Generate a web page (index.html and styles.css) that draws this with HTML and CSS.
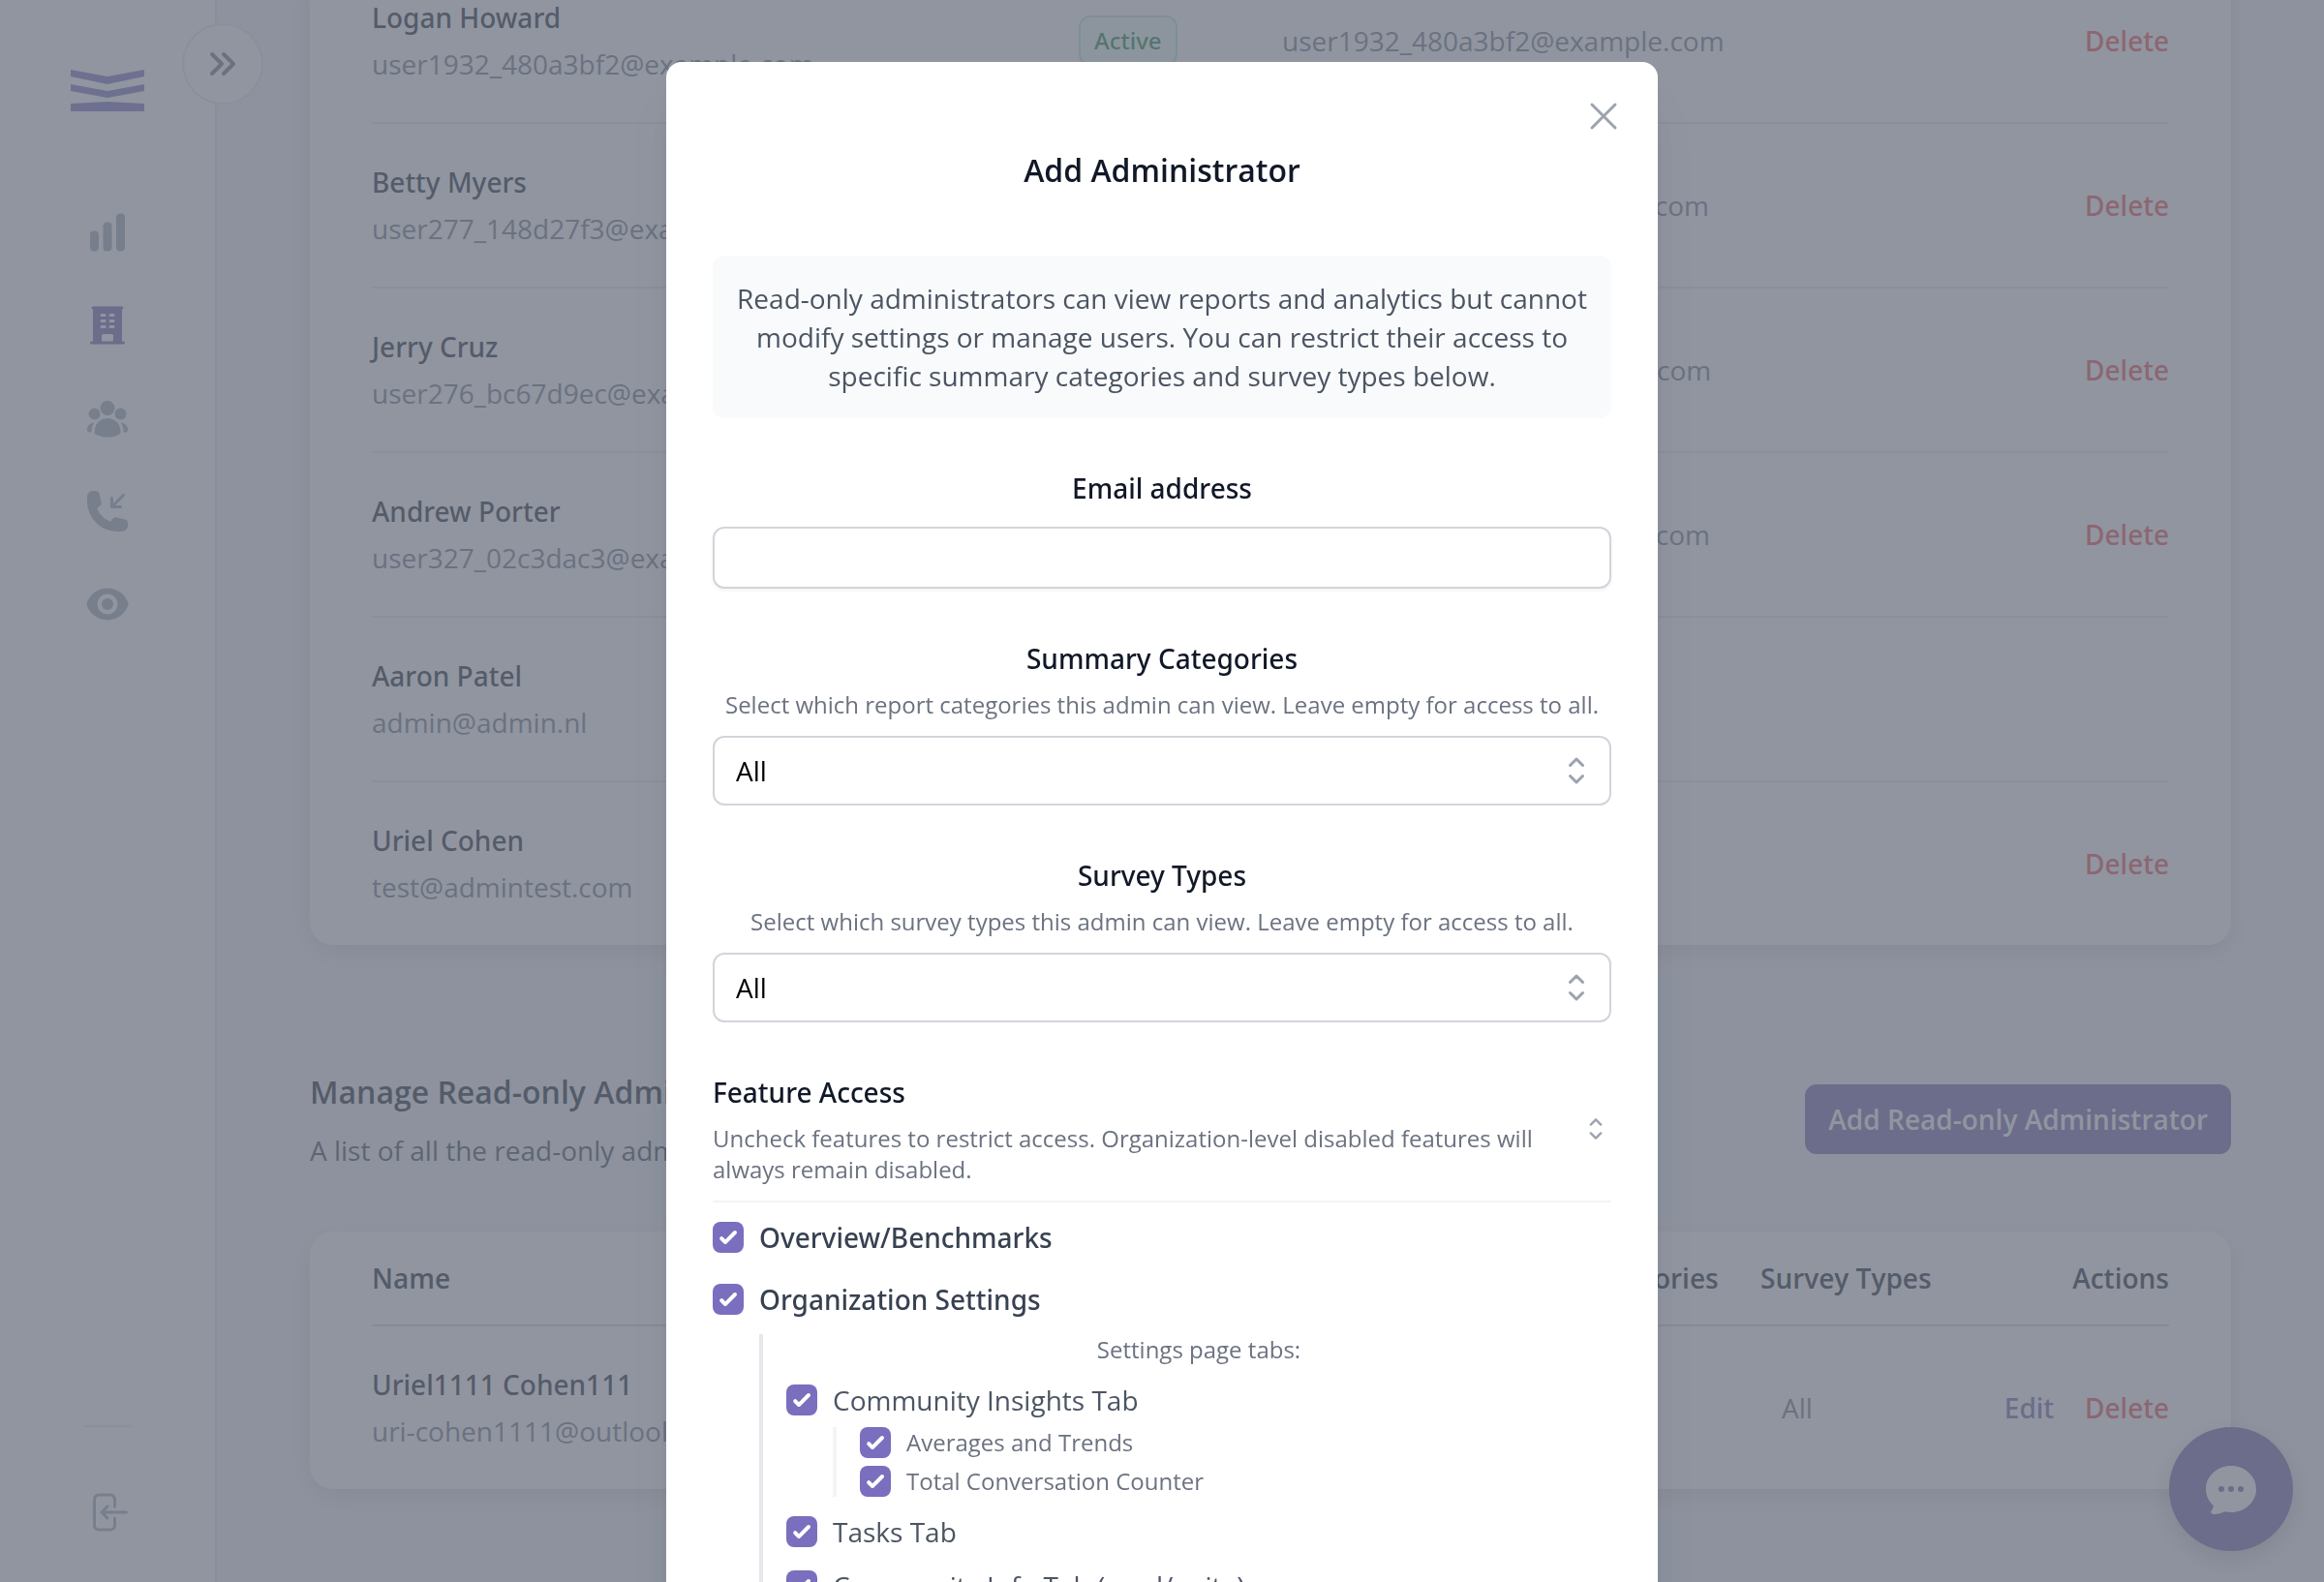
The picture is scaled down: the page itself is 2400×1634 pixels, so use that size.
FILE: index.html
```html
<!DOCTYPE html>
<html lang="en">
<head>
    <meta charset="UTF-8">
    <meta name="viewport" content="width=device-width, initial-scale=1">
    <title>Administrators</title>
    <link rel="stylesheet" href="styles.css">
</head>
<body>
    <div class="app">
        <aside class="sidebar">
            <a href="#" class="logo" aria-label="Home">
                <svg width="76" height="43" viewBox="0 0 76 43" fill="currentColor">
                    <path d="M0 0l38 7 38-7v7l-38 8L0 7z"/>
                    <path d="M0 15l38 7 38-7v7l-38 7-38-7z"/>
                    <path d="M0 35l38-2 38 2v8H0z"/>
                </svg>
            </a>
            <nav class="side-nav">
                <a href="#" aria-label="Reports">
                    <svg class="icon" viewBox="0 0 24 24"><path d="M18.375 2.25c-1.035 0-1.875.84-1.875 1.875v15.75c0 1.035.84 1.875 1.875 1.875h.75c1.035 0 1.875-.84 1.875-1.875V4.125c0-1.036-.84-1.875-1.875-1.875h-.75ZM9.75 8.625c0-1.036.84-1.875 1.875-1.875h.75c1.036 0 1.875.84 1.875 1.875v11.25c0 1.035-.84 1.875-1.875 1.875h-.75a1.875 1.875 0 0 1-1.875-1.875V8.625ZM3 13.125c0-1.036.84-1.875 1.875-1.875h.75c1.036 0 1.875.84 1.875 1.875v6.75c0 1.035-.84 1.875-1.875 1.875h-.75A1.875 1.875 0 0 1 3 19.875v-6.75Z"/></svg>
                </a>
                <a href="#" class="active" aria-label="Organization">
                    <svg class="icon" viewBox="0 0 24 24"><path fill-rule="evenodd" d="M4.5 2.25a.75.75 0 0 0 0 1.5v16.5h-.75a.75.75 0 0 0 0 1.5h16.5a.75.75 0 0 0 0-1.5h-.75V3.75a.75.75 0 0 0 0-1.5h-15ZM9 6a.75.75 0 0 0 0 1.5h1.5a.75.75 0 0 0 0-1.5H9Zm-.75 3.75A.75.75 0 0 1 9 9h1.5a.75.75 0 0 1 0 1.5H9a.75.75 0 0 1-.75-.75ZM9 12a.75.75 0 0 0 0 1.5h1.5a.75.75 0 0 0 0-1.5H9Zm3.75-5.25A.75.75 0 0 1 13.5 6H15a.75.75 0 0 1 0 1.5h-1.5a.75.75 0 0 1-.75-.75ZM13.5 9a.75.75 0 0 0 0 1.5H15A.75.75 0 0 0 15 9h-1.5Zm-.75 3.75a.75.75 0 0 1 .75-.75H15a.75.75 0 0 1 0 1.5h-1.5a.75.75 0 0 1-.75-.75ZM9 19.5v-2.25a.75.75 0 0 1 .75-.75h4.5a.75.75 0 0 1 .75.75v2.25a.75.75 0 0 1-.75.75h-4.5A.75.75 0 0 1 9 19.5Z"/></svg>
                </a>
                <a href="#" aria-label="Users">
                    <svg class="icon" viewBox="0 0 24 24"><path d="M8.25 6.75a3.75 3.75 0 1 1 7.5 0 3.75 3.75 0 0 1-7.5 0ZM15.75 9.75a3 3 0 1 1 6 0 3 3 0 0 1-6 0ZM2.25 9.75a3 3 0 1 1 6 0 3 3 0 0 1-6 0ZM6.31 15.117A6.745 6.745 0 0 1 12 12a6.745 6.745 0 0 1 6.709 7.498.75.75 0 0 1-.372.568A12.696 12.696 0 0 1 12 21.75c-2.305 0-4.47-.612-6.337-1.684a.75.75 0 0 1-.372-.568 6.787 6.787 0 0 1 1.019-4.38Z"/><path d="M5.082 14.254a8.287 8.287 0 0 0-1.308 5.135 9.687 9.687 0 0 1-1.764-.44l-.115-.04a.563.563 0 0 1-.373-.487l-.01-.121a3.75 3.75 0 0 1 3.57-4.047ZM20.226 19.389a8.287 8.287 0 0 0-1.308-5.135 3.75 3.75 0 0 1 3.57 4.047l-.01.121a.563.563 0 0 1-.373.486l-.115.04c-.567.2-1.156.349-1.764.441Z"/></svg>
                </a>
                <a href="#" aria-label="Calls">
                    <svg class="icon" viewBox="0 0 24 24"><path d="M19.5 9.75a.75.75 0 0 1-.75.75h-4.5a.75.75 0 0 1-.75-.75v-4.5a.75.75 0 0 1 1.5 0v2.69l4.72-4.72a.75.75 0 1 1 1.06 1.06L16.06 9h2.69a.75.75 0 0 1 .75.75Z"/><path d="M1.5 4.5a3 3 0 0 1 3-3h1.372c.86 0 1.61.586 1.819 1.42l1.105 4.423a1.875 1.875 0 0 1-.694 1.955l-1.293.97c-.135.101-.164.249-.126.352a11.285 11.285 0 0 0 6.697 6.697c.103.038.25.009.352-.126l.97-1.293a1.875 1.875 0 0 1 1.955-.694l4.423 1.105c.834.209 1.42.959 1.42 1.82V19.5a3 3 0 0 1-3 3h-2.25C8.552 22.5 1.5 15.448 1.5 6.75V4.5Z"/></svg>
                </a>
                <a href="#" aria-label="Overview">
                    <svg class="icon" viewBox="0 0 24 24"><path d="M12 15a3 3 0 1 0 0-6 3 3 0 0 0 0 6Z"/><path fill-rule="evenodd" d="M1.323 11.447C2.811 6.976 7.028 3.75 12.001 3.75c4.97 0 9.185 3.223 10.675 7.69.12.362.12.752 0 1.113-1.487 4.471-5.705 7.697-10.677 7.697-4.97 0-9.186-3.223-10.675-7.69a1.762 1.762 0 0 1 0-1.113ZM17.25 12a5.25 5.25 0 1 1-10.5 0 5.25 5.25 0 0 1 10.5 0Z"/></svg>
                </a>
            </nav>
            <div class="side-bottom">
                <a href="#" aria-label="Log out">
                    <svg class="icon icon-line" viewBox="0 0 24 24"><path d="M15.75 9V5.25A2.25 2.25 0 0 0 13.5 3h-6a2.25 2.25 0 0 0-2.25 2.25v13.5A2.25 2.25 0 0 0 7.5 21h6a2.25 2.25 0 0 0 2.25-2.25V15M12 9l-3 3m0 0 3 3m-3-3h12.75"/></svg>
                </a>
            </div>
            <button type="button" class="expand-btn" aria-label="Expand sidebar">
                <svg width="40" height="40" viewBox="0 0 20 20"><path d="M4.5 5l5 5-5 5M10.5 5l5 5-5 5"/></svg>
            </button>
        </aside>

        <main class="content">
            <section class="card">
                <table class="admins">
                    <colgroup>
                        <col>
                        <col class="col-status">
                        <col class="col-email">
                        <col class="col-actions">
                    </colgroup>
                    <tbody>
                        <tr>
                            <td><div class="name">Logan Howard</div><div class="mail">user1932_480a3bf2@example.com</div></td>
                            <td><span class="badge">Active</span></td>
                            <td>user1932_480a3bf2@example.com</td>
                            <td class="actions"><a href="#" class="delete">Delete</a></td>
                        </tr>
                        <tr>
                            <td><div class="name">Betty Myers</div><div class="mail">user277_148d27f3@example.com</div></td>
                            <td><span class="badge">Active</span></td>
                            <td>user277_148d27f3@example.com</td>
                            <td class="actions"><a href="#" class="delete">Delete</a></td>
                        </tr>
                        <tr>
                            <td><div class="name">Jerry Cruz</div><div class="mail">user276_bc67d9ec@example.com</div></td>
                            <td><span class="badge">Active</span></td>
                            <td>user276_bc67d9ec@example.com</td>
                            <td class="actions"><a href="#" class="delete">Delete</a></td>
                        </tr>
                        <tr>
                            <td><div class="name">Andrew Porter</div><div class="mail">user327_02c3dac3@example.com</div></td>
                            <td><span class="badge">Active</span></td>
                            <td>user327_02c3dac3@example.com</td>
                            <td class="actions"><a href="#" class="delete">Delete</a></td>
                        </tr>
                        <tr>
                            <td><div class="name">Aaron Patel</div><div class="mail">admin@admin.nl</div></td>
                            <td><span class="badge">Active</span></td>
                            <td>admin@admin.nl</td>
                            <td></td>
                        </tr>
                        <tr>
                            <td><div class="name">Uriel Cohen</div><div class="mail">test@admintest.com</div></td>
                            <td><span class="badge">Active</span></td>
                            <td>test@admintest.com</td>
                            <td class="actions"><a href="#" class="delete">Delete</a></td>
                        </tr>
                    </tbody>
                </table>
            </section>

            <header class="section-head">
                <div>
                    <h2>Manage Read-only Administrators</h2>
                    <p>A list of all the read-only administrators.</p>
                </div>
                <button type="button" class="btn-primary">Add Read-only Administrator</button>
            </header>

            <section class="card">
                <table class="admins">
                    <colgroup>
                        <col>
                        <col class="col-status">
                        <col class="col-categories">
                        <col class="col-surveys">
                        <col class="col-actions">
                    </colgroup>
                    <thead>
                        <tr>
                            <th>Name</th>
                            <th>Status</th>
                            <th>Summary Categories</th>
                            <th>Survey Types</th>
                            <th class="actions">Actions</th>
                        </tr>
                    </thead>
                    <tbody>
                        <tr>
                            <td><div class="name">Uriel1111 Cohen111</div><div class="mail">uri-cohen1111@outlook.com</div></td>
                            <td><span class="badge">Active</span></td>
                            <td class="inset">All</td>
                            <td class="inset">All</td>
                            <td class="actions"><a href="#" class="edit">Edit</a><a href="#" class="delete">Delete</a></td>
                        </tr>
                    </tbody>
                </table>
            </section>
        </main>

        <button type="button" class="chat-btn" aria-label="Open chat">
            <svg width="64" height="64" viewBox="0 0 24 24" fill="currentColor"><path fill-rule="evenodd" d="M4.804 21.644A6.707 6.707 0 0 0 6 21.75a6.721 6.721 0 0 0 3.583-1.029c.774.182 1.584.279 2.417.279 5.322 0 9.75-3.97 9.75-9 0-5.03-4.428-9-9.75-9s-9.75 3.97-9.75 9c0 2.409 1.025 4.587 2.674 6.192.232.226.277.428.254.543a3.73 3.73 0 0 1-.814 1.686.75.75 0 0 0 .44 1.223ZM8.25 10.875a1.125 1.125 0 1 0 0 2.25 1.125 1.125 0 0 0 0-2.25ZM10.875 12a1.125 1.125 0 1 1 2.25 0 1.125 1.125 0 0 1-2.25 0Zm4.875-1.125a1.125 1.125 0 1 0 0 2.25 1.125 1.125 0 0 0 0-2.25Z"/></svg>
        </button>
    </div>

    <div class="overlay">
        <form class="modal" role="dialog" aria-modal="true" aria-labelledby="modal-title">
            <button type="button" class="close-btn" aria-label="Close">
                <svg class="icon icon-line" viewBox="0 0 24 24"><path d="M6 18 18 6M6 6l12 12"/></svg>
            </button>
            <h1 id="modal-title">Add Administrator</h1>
            <p class="info">Read-only administrators can view reports and analytics but cannot modify settings or manage users. You can restrict their access to specific summary categories and survey types below.</p>

            <div class="field">
                <label for="email">Email address</label>
                <input type="email" id="email" class="text-input">
            </div>

            <div class="field">
                <label for="categories">Summary Categories</label>
                <p class="help">Select which report categories this admin can view. Leave empty for access to all.</p>
                <div class="select-wrap">
                    <select id="categories"><option>All</option></select>
                    <svg width="40" height="40" viewBox="0 0 20 20"><path d="M6.75 7.25L10 4l3.25 3.25M6.75 12.75L10 16l3.25-3.25"/></svg>
                </div>
            </div>

            <div class="field">
                <label for="surveys">Survey Types</label>
                <p class="help">Select which survey types this admin can view. Leave empty for access to all.</p>
                <div class="select-wrap">
                    <select id="surveys"><option>All</option></select>
                    <svg width="40" height="40" viewBox="0 0 20 20"><path d="M6.75 7.25L10 4l3.25 3.25M6.75 12.75L10 16l3.25-3.25"/></svg>
                </div>
            </div>

            <div class="features">
                <button type="button" class="features-head" aria-expanded="true">
                    <span>
                        <span class="features-title">Feature Access</span>
                        <span class="help">Uncheck features to restrict access. Organization-level disabled features will always remain disabled.</span>
                    </span>
                    <svg width="32" height="32" viewBox="0 0 20 20"><path d="M6.75 7.25L10 4l3.25 3.25M6.75 12.75L10 16l3.25-3.25"/></svg>
                </button>
                <div class="feature-list">
                    <label class="check main"><input type="checkbox" checked>Overview/Benchmarks</label>
                    <label class="check main"><input type="checkbox" checked>Organization Settings</label>
                </div>
                <div class="tabs">
                    <p class="help">Settings page tabs:</p>
                    <div>
                        <label class="check"><input type="checkbox" checked>Community Insights Tab</label>
                        <div class="sub-tabs">
                            <label class="check small"><input type="checkbox" checked>Averages and Trends</label>
                            <label class="check small"><input type="checkbox" checked>Total Conversation Counter</label>
                        </div>
                    </div>
                    <label class="check"><input type="checkbox" checked>Tasks Tab</label>
                    <label class="check"><input type="checkbox" checked>Community Info Tab (read/write)</label>
                </div>
            </div>
        </form>
    </div>
</body>
</html>
```

FILE: styles.css
```css
* {
    box-sizing: border-box;
}

body {
    margin: 0;
    font-family: "Open Sans", "Noto Sans", sans-serif;
    font-size: 28px;
    line-height: 40px;
    color: #111827;
    background-color: #f3f4f6;
    overflow: hidden;
}

h1, h2, p {
    margin: 0;
}

a {
    color: inherit;
    text-decoration: none;
}

button, input, select {
    font: inherit;
    color: inherit;
}

button {
    border: none;
    padding: 0;
    background: none;
    cursor: pointer;
}

svg {
    display: block;
}

.icon {
    width: 48px;
    height: 48px;
    fill: currentColor;
}

.icon-line {
    fill: none;
    stroke: currentColor;
    stroke-width: 1.5;
    stroke-linecap: round;
    stroke-linejoin: round;
}

.app {
    display: flex;
    height: 100vh;
}

/* sidebar */
.sidebar {
    position: relative;
    flex: none;
    display: flex;
    flex-direction: column;
    align-items: center;
    width: 224px;
    padding: 72px 0 48px;
    background-color: white;
    border-right: 2px solid #e5e7eb;
    color: #9ca3af;
}

.logo {
    color: #7a6ebe;
}

.side-nav {
    display: flex;
    flex-direction: column;
    gap: 48px;
    margin-top: 101px;
}

.side-nav .active {
    color: #6c5fa8;
}

.side-bottom {
    margin-top: auto;
    padding-top: 64px;
    border-top: 2px solid #e5e7eb;
}

.expand-btn {
    position: absolute;
    top: 24px;
    right: -50px;
    display: flex;
    align-items: center;
    justify-content: center;
    width: 84px;
    height: 84px;
    border: 2px solid #e5e7eb;
    border-radius: 50%;
    background-color: white;
    color: #6b7280;
}

.expand-btn svg {
    fill: none;
    stroke: currentColor;
    stroke-width: 2;
    stroke-linecap: round;
    stroke-linejoin: round;
}

/* page content, kept scrolled to its end */
.content {
    flex: 1;
    display: flex;
    flex-direction: column;
    justify-content: flex-end;
    padding: 0 96px 96px;
}

.card {
    padding: 0 64px;
    border-radius: 24px;
    background-color: white;
    box-shadow: 0 8px 24px rgba(0, 0, 0, 0.12);
}

.admins {
    width: 100%;
    table-layout: fixed;
    border-collapse: separate;
    border-spacing: 0;
    text-align: left;
}

.col-status {
    width: 210px;
}

.col-email {
    width: 700px;
}

.col-categories {
    width: 324px;
}

.col-surveys {
    width: 206px;
}

.col-actions {
    width: 216px;
}

.admins th {
    padding: 28px 0;
    border-bottom: 2px solid #d1d5db;
    font-weight: 600;
    white-space: nowrap;
}

.admins td {
    padding: 40px 0;
    border-bottom: 2px solid #e5e7eb;
    color: #6b7280;
    white-space: nowrap;
}

.admins tr:last-child td {
    border-bottom: none;
}

.admins .inset {
    padding-left: 22px;
}

.admins .actions {
    text-align: right;
}

/* Open Sans has no medium cut installed, Noto Sans does */
.name,
.badge,
.edit,
.delete,
.field label,
.features-title,
.check.main {
    font-family: "Noto Sans", "Open Sans", sans-serif;
    font-weight: 500;
}

.name {
    margin-bottom: 8px;
    color: #111827;
}

.badge {
    display: inline-block;
    padding: 4px 14px;
    border: 2px solid #bbe5cb;
    border-radius: 12px;
    background-color: #f0fdf4;
    color: #15803d;
    font-size: 24px;
}

.edit {
    margin-right: 32px;
    color: #6c5fa8;
}

.delete {
    color: #ef4444;
}

.section-head {
    display: flex;
    align-items: center;
    justify-content: space-between;
    margin: 128px 0 64px;
}

.section-head h2 {
    margin-bottom: 16px;
    font-size: 32px;
    line-height: 48px;
    font-weight: 600;
}

.section-head p {
    color: #374151;
}

.btn-primary {
    padding: 16px 24px;
    border-radius: 12px;
    background-color: #6c5fa8;
    color: white;
    font-weight: 600;
}

.chat-btn {
    position: fixed;
    right: 32px;
    bottom: 32px;
    display: flex;
    align-items: center;
    justify-content: center;
    width: 128px;
    height: 128px;
    border-radius: 50%;
    background-color: #6c5fa8;
    color: white;
    box-shadow: 0 8px 24px rgba(0, 0, 0, 0.2);
}

/* modal */
.overlay {
    position: fixed;
    inset: 0;
    display: flex;
    align-items: flex-start;
    justify-content: center;
    padding-top: 64px;
    overflow: hidden;
    background-color: rgba(107, 114, 128, 0.75);
}

.modal {
    position: relative;
    width: 100%;
    max-width: 1024px;
    padding: 88px 48px 64px;
    border-radius: 16px;
    background-color: white;
    box-shadow: 0 40px 50px -10px rgba(0, 0, 0, 0.1), 0 16px 20px -12px rgba(0, 0, 0, 0.1);
    text-align: center;
}

.close-btn {
    position: absolute;
    top: 32px;
    right: 32px;
    color: #9ca3af;
}

.modal h1 {
    font-size: 32px;
    line-height: 48px;
    font-weight: 600;
}

.info {
    margin-top: 64px;
    padding: 24px;
    border-radius: 12px;
    background-color: #f9fafb;
    color: #4b5563;
}

.field {
    display: flex;
    flex-direction: column;
    margin-top: 52px;
}

.text-input {
    width: 100%;
    height: 64px;
    margin-top: 20px;
    padding: 0 24px;
    border: 2px solid #d1d5db;
    border-radius: 12px;
    background-color: white;
    box-shadow: 0 2px 4px rgba(0, 0, 0, 0.05);
}

.help {
    display: block;
    font-size: 24px;
    line-height: 32px;
    color: #6b7280;
}

.field .help {
    margin: 12px 0 16px;
}

.select-wrap {
    display: grid;
    align-items: center;
}

.select-wrap select,
.select-wrap svg {
    grid-area: 1 / 1;
}

.select-wrap select {
    appearance: none;
    width: 100%;
    height: 72px;
    padding: 0 22px;
    border: 2px solid #d1d5db;
    border-radius: 12px;
    background-color: white;
    color: black;
}

.select-wrap svg {
    justify-self: end;
    margin-right: 16px;
    pointer-events: none;
}

.select-wrap svg,
.features-head svg {
    flex: none;
    fill: none;
    stroke: #9ca3af;
    stroke-width: 1.5;
    stroke-linecap: round;
    stroke-linejoin: round;
}

.features {
    margin-top: 52px;
    text-align: left;
}

.features-head {
    display: flex;
    align-items: center;
    justify-content: space-between;
    gap: 32px;
    width: 100%;
    padding-bottom: 16px;
    border-bottom: 2px solid #f3f4f6;
    text-align: left;
}

.features-title {
    display: block;
    margin-bottom: 12px;
}

.feature-list {
    display: flex;
    flex-direction: column;
    gap: 24px;
    padding: 16px 0;
}

.check {
    display: flex;
    align-items: center;
    gap: 16px;
    color: #4b5563;
}

.check.main {
    color: #374151;
}

.check.small {
    font-size: 24px;
    line-height: 32px;
    color: #6b7280;
}

.check input {
    appearance: none;
    flex: none;
    display: grid;
    place-items: center;
    width: 32px;
    height: 32px;
    margin: 0;
    border-radius: 8px;
    background-color: #7a6ebe;
}

/* tick mark */
.check input:checked::before {
    content: "";
    width: 32px;
    height: 32px;
    background-color: white;
    clip-path: path("M24.4 9.6a2 2 0 0 1 0 2.8l-10 10a2 2 0 0 1-2.8 0l-4-4a2 2 0 0 1 2.8-2.8L13 18.2l8.6-8.6a2 2 0 0 1 2.8 0z");
}

.tabs {
    display: flex;
    flex-direction: column;
    gap: 16px;
    margin-left: 48px;
    padding-left: 24px;
    border-left: 4px solid #e5e7eb;
}

.tabs > .help {
    text-align: center;
}

.sub-tabs {
    display: flex;
    flex-direction: column;
    gap: 8px;
    margin: 8px 0 0 48px;
    padding-left: 24px;
    border-left: 4px solid #f3f4f6;
}
```
